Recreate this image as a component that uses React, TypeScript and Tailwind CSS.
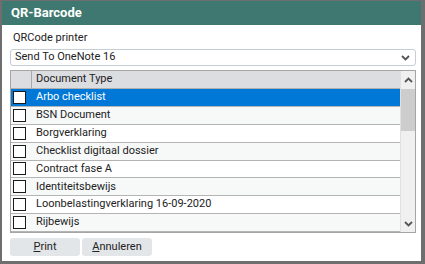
import { useState } from 'react';

const docTypes = [
  'Arbo checklist',
  'BSN Document',
  'Borgverklaring',
  'Checklist digitaal dossier',
  'Contract fase A',
  'Identiteitsbewijs',
  'Loonbelastingverklaring 16-09-2020',
  'Rijbewijs',
];

function Chevron({ up = false }: { up?: boolean }) {
  return (
    <svg width="9" height="6" viewBox="0 0 9 6" className={up ? 'rotate-180' : ''}>
      <path d="M1 1 L4.5 4.5 L8 1" fill="none" stroke="#555" strokeWidth="1.8" />
    </svg>
  );
}

export default function App() {
  const [selected, setSelected] = useState(0);

  return (
    <div
      className="w-[425px] h-[264px] bg-white border-l-2 border-r-[4px] border-t border-b-[3px] border-[#6e6e6e] flex flex-col text-[#222] overflow-hidden"
      style={{ fontFamily: 'Roboto, "Liberation Sans", sans-serif' }}
    >
      {/* Title bar */}
      <div className="h-[24px] bg-[#3e7870] flex items-center px-[9px] shrink-0">
        <span className="text-white font-bold text-[13px]">QR-Barcode</span>
      </div>

      <div className="flex flex-col pl-[8px] pr-[5px]">
        <div className="text-[11px] h-[15px] leading-[15px] mt-[5px] ml-[3px]">QRCode printer</div>

        {/* Select */}
        <div className="mt-[4px] h-[17px] border border-[#c5cdd6] rounded-[3px] flex items-center justify-between pl-[4px] pr-[5px] text-[11px]">
          <span>Send To OneNote 16</span>
          <Chevron />
        </div>

        {/* Grid */}
        <div className="mt-[4px] h-[163px] border border-[#a5a5a5] flex">
          <div className="flex-1 flex flex-col">
            <div className="h-[18px] bg-[#dcdde1] border-b border-[#b0b0b0] flex text-[11px] shrink-0">
              <div className="w-[21px] border-r border-[#a8a8a8]" />
              <div className="pl-[4px] flex items-center">Document Type</div>
            </div>
            {docTypes.map((d, i) => {
              const sel = i === selected;
              return (
                <div
                  key={d}
                  onClick={() => setSelected(i)}
                  className={`h-[18px] flex items-center border-b border-[#b4b4b4] text-[11px] ${
                    sel ? 'bg-[#0078d7] text-white' : i % 2 === 1 ? 'bg-[#f7f9f9]' : 'bg-white'
                  }`}
                >
                  <div className="w-[21px] flex pl-[2px]">
                    <div className="w-[13px] h-[13px] bg-white border-[1.5px] border-[#1a1a1a]" />
                  </div>
                  <span className="pl-[4px]">{d}</span>
                </div>
              );
            })}
          </div>
          {/* Scrollbar */}
          <div className="w-[15px] bg-[#f0f0f0] flex flex-col border-l border-[#e0e0e0]">
            <div className="h-[18px] flex items-center justify-center">
              <Chevron up />
            </div>
            <div className="h-[42px] bg-[#cdcdcd]" />
            <div className="flex-1" />
            <div className="h-[16px] flex items-center justify-center">
              <Chevron />
            </div>
          </div>
        </div>

        {/* Buttons */}
        <div className="mt-[5px] flex gap-[2px]">
          <button className="w-[70px] h-[18px] bg-[#e3e6e9] rounded-[3px] text-[11px] text-[#222]">
            <span className="underline">P</span>rint
          </button>
          <button className="w-[70px] h-[18px] bg-[#e3e6e9] rounded-[3px] text-[11px] text-[#222]">
            <span className="underline">A</span>nnuleren
          </button>
        </div>
      </div>
    </div>
  );
}
